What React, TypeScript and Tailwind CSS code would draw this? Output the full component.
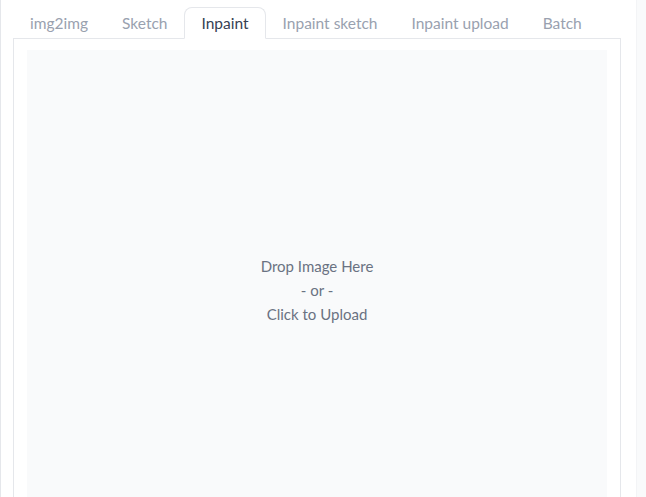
const tabs = ["img2img", "Sketch", "Inpaint", "Inpaint sketch", "Inpaint upload", "Batch"];

export default function App() {
  return (
    <div className="flex h-[497px] w-[646px] overflow-hidden bg-white font-['Lato',sans-serif]">
      <div className="w-[636px] shrink-0 border-l border-gray-200 pl-3 pt-[7px]">
        <div className="flex w-[608px]">
          {tabs.map((t) => (
            <div
              key={t}
              className={
                t === "Inpaint"
                  ? "relative z-10 -mb-px h-[32px] rounded-t-lg border border-gray-200 border-b-white bg-white px-4 pt-[4px] text-[15.5px] text-gray-700"
                  : "-mb-px h-[32px] border border-transparent px-4 pt-[4px] text-[15.5px] text-gray-400"
              }
            >
              {t}
            </div>
          ))}
        </div>
        <div className="h-[500px] w-[608px] border border-gray-200 px-[13px] pt-[11px]">
          <div className="flex h-[480px] flex-col items-center justify-center bg-[#f9fafb] text-[15px] leading-6 text-gray-500">
            <span>Drop Image Here</span>
            <span>- or -</span>
            <span>Click to Upload</span>
          </div>
        </div>
      </div>
      <div className="flex-1 border-l border-gray-100 bg-gray-50" />
    </div>
  );
}
